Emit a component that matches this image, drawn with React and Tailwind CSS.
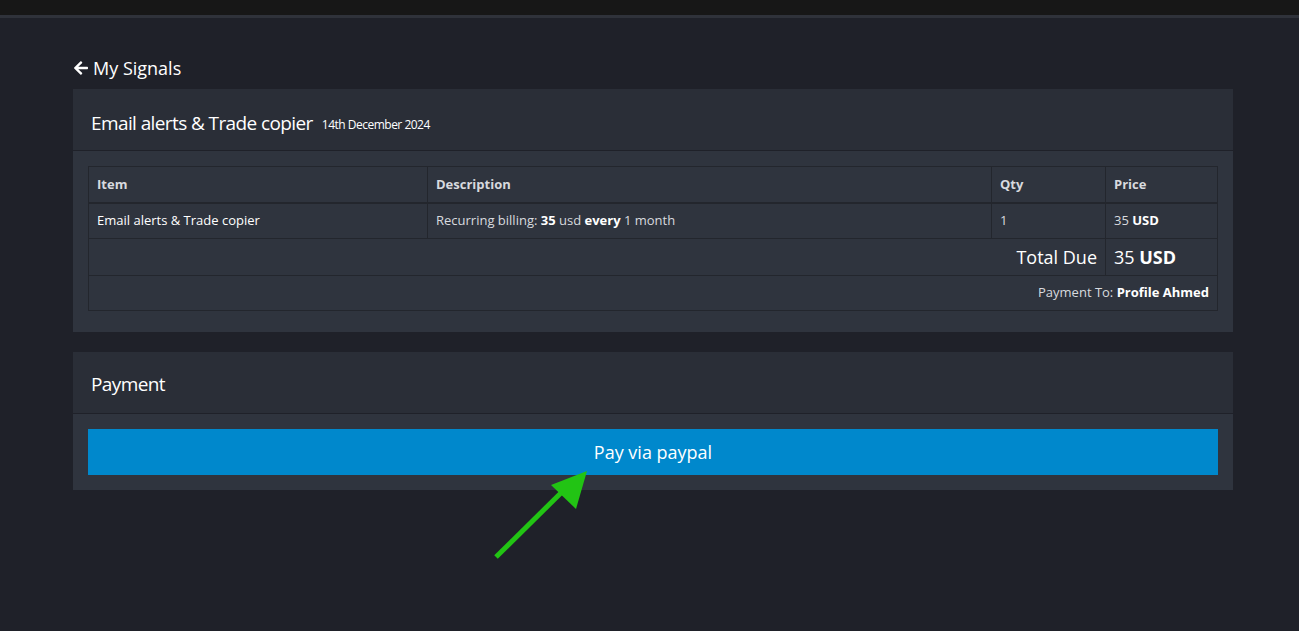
import React from 'react';

export default function App() {
  return (
    <div className="relative min-h-[631px] bg-[#1f2129] text-white font-['Open_Sans',sans-serif]">
      <div className="h-[15px] bg-[#171717]" />
      <div className="h-[3px] bg-[#2f323a]" />

      <div className="pl-[73px] pr-[66px] pt-[39px]">
        <a className="flex items-center gap-[4px] h-[22px] text-[18px] text-white">
          <svg width="16" height="16" viewBox="0 0 448 512" fill="currentColor">
            <path d="M257.5 445.1l-22.2 22.2c-9.4 9.4-24.6 9.4-33.9 0L7 273c-9.4-9.4-9.4-24.6 0-33.9L201.4 44.7c9.4-9.4 24.6-9.4 33.9 0l22.2 22.2c9.5 9.5 9.3 25-.4 34.3L136.6 216H424c13.3 0 24 10.7 24 24v32c0 13.3-10.7 24-24 24H136.6l120.5 114.8c9.8 9.3 10 24.8.4 34.3z" />
          </svg>
          <span>My Signals</span>
        </a>

        <div className="mt-[10px] bg-[#2f343e]">
          <div className="h-[62px] bg-[#2a2e37] border-b border-[#1f2129] flex items-center px-[18px] pt-[8px]">
            <span className="text-[19px] tracking-[-0.6px]">Email alerts &amp; Trade copier</span>
            <span className="ml-[9px] mt-[3px] text-[12px] tracking-[-0.5px]">14th December 2024</span>
          </div>
          <div className="pt-[15px] px-[15px] pb-[21px]">
            <table className="w-full border-collapse text-[13px] text-[#d8dadf]">
              <thead>
                <tr className="h-[36px]">
                  <th className="w-[339px] border border-[#23262d] border-b-2 text-left font-bold px-[8px]">Item</th>
                  <th className="w-[564px] border border-[#23262d] border-b-2 text-left font-bold px-[8px]">Description</th>
                  <th className="w-[114px] border border-[#23262d] border-b-2 text-left font-bold px-[8px]">Qty</th>
                  <th className="border border-[#23262d] border-b-2 text-left font-bold px-[8px]">Price</th>
                </tr>
              </thead>
              <tbody>
                <tr className="h-[36px]">
                  <td className="border border-[#23262d] px-[8px] text-white">Email alerts &amp; Trade copier</td>
                  <td className="border border-[#23262d] px-[8px]">
                    Recurring billing: <b className="text-white">35</b> usd <b className="text-white">every</b> 1 month
                  </td>
                  <td className="border border-[#23262d] px-[8px]">1</td>
                  <td className="border border-[#23262d] px-[8px]">
                    35 <b className="text-white">USD</b>
                  </td>
                </tr>
                <tr className="h-[37px]">
                  <td colSpan={3} className="border border-[#23262d] px-[8px] text-right text-[18px] text-white">Total Due</td>
                  <td className="border border-[#23262d] px-[8px] text-[18px] text-white">
                    35 <b>USD</b>
                  </td>
                </tr>
                <tr className="h-[35px]">
                  <td colSpan={4} className="border border-[#23262d] px-[8px] text-right">
                    Payment To: <b className="text-white">Profile Ahmed</b>
                  </td>
                </tr>
              </tbody>
            </table>
          </div>
        </div>

        <div className="mt-[20px] bg-[#2f343e]">
          <div className="h-[62px] bg-[#2a2e37] border-b border-[#1f2129] flex items-center px-[18px] pt-[4px]">
            <span className="text-[19px] tracking-[-0.6px]">Payment</span>
          </div>
          <div className="p-[15px]">
            <button className="w-full h-[46px] bg-[#0088cc] text-white text-[18px] flex items-center justify-center">
              Pay via paypal
            </button>
          </div>
        </div>
      </div>

      <svg className="absolute left-[488px] top-[464px]" width="110" height="100" viewBox="0 0 110 100">
        <line x1="8" y1="93" x2="80" y2="22" stroke="#22c414" strokeWidth="5" />
        <polygon points="99,7 63,21 88,45" fill="#22c414" />
      </svg>
    </div>
  );
}
